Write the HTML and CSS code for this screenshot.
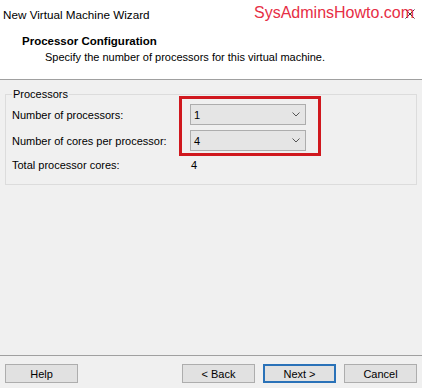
FILE: index.html
```html
<!doctype html>
<html>
<head>
<meta charset="utf-8">
<title>New Virtual Machine Wizard</title>
<link rel="stylesheet" href="styles.css">
</head>
<body>
<div class="wizard">
  <div class="titlebar">
    <span class="title">New Virtual Machine Wizard</span>
    <svg class="close" width="10" height="10" viewBox="0 0 10 10"><path d="M0.5 0.5L9.5 9.5M9.5 0.5L0.5 9.5" stroke="#333" stroke-width="1" fill="none"/></svg>
  </div>
  <div class="brand">SysAdminsHowto.com</div>

  <div class="header">
    <div class="header-title">Processor Configuration</div>
    <div class="header-sub">Specify the number of processors for this virtual machine.</div>
  </div>

  <div class="content">
    <fieldset class="group">
      <legend>Processors</legend>
      <div class="form">
        <span class="label">Number of processors:</span>
        <div class="combo"><span>1</span><svg width="8" height="5" viewBox="0 0 8 5"><polyline points="0.5,0.5 4,4 7.5,0.5" fill="none" stroke="#555" stroke-width="1"/></svg></div>
        <span class="label">Number of cores per processor:</span>
        <div class="combo"><span>4</span><svg width="8" height="5" viewBox="0 0 8 5"><polyline points="0.5,0.5 4,4 7.5,0.5" fill="none" stroke="#555" stroke-width="1"/></svg></div>
        <span class="label">Total processor cores:</span>
        <span class="value">4</span>
      </div>
    </fieldset>
  </div>
  <div class="highlight"></div>

  <div class="footer">
    <button class="btn">Help</button>
    <div class="nav">
      <button class="btn">&lt; Back</button>
      <button class="btn btn-default">Next &gt;</button>
      <button class="btn">Cancel</button>
    </div>
  </div>
</div>
</body>
</html>
```

FILE: styles.css
```css
* { margin: 0; padding: 0; box-sizing: border-box; }
body { background: #f0f0f0; font-family: "Liberation Sans", Arial, sans-serif; font-size: 11px; color: #000; }

.wizard { position: relative; width: 422px; height: 388px; display: flex; flex-direction: column; background: #f0f0f0; overflow: hidden; }

.titlebar { height: 28px; background: #fff; display: flex; align-items: center; padding: 0 7px 0 3px; }
.title { font-size: 11.7px; color: #000; }
.close { margin-left: auto; }

.brand { position: absolute; left: 254px; top: 4px; font-size: 16px; line-height: 18px; color: #e62e45; }

.header { height: 52px; background: #fff; border-bottom: 1px solid #a0a0a0; padding: 6px 0 0 22px; }
.header-title { font-weight: bold; font-size: 11.5px; line-height: 14px; }
.header-sub { line-height: 14px; margin-top: 2px; padding-left: 23px; }

.content { padding: 0 5px; }
.group { margin-top: 8px; border: 1px solid #dcdcdc; padding: 4px 6px 10px 6px; }
.group legend { padding: 0 1px; line-height: 12px; }

.form { display: grid; grid-template-columns: 178px 116px; grid-template-rows: 21px 21px 18px; row-gap: 5px; align-items: center; }
.combo { height: 21px; background: #e5e5e5; border: 1px solid #adadad; display: flex; align-items: center; justify-content: space-between; padding: 0 5px 0 3px; }
.value { padding-left: 1px; }

.highlight { position: absolute; left: 179px; top: 96px; width: 142px; height: 60px; border: 3px solid #d0181e; }

.footer { margin-top: auto; border-top: 1px solid #a0a0a0; padding: 8px 5px 5px 5px; display: flex; justify-content: space-between; }
.nav { display: flex; gap: 8px; }
.btn { width: 73px; height: 19px; background: #e1e1e1; border: 1px solid #adadad; font-family: "Liberation Sans", Arial, sans-serif; font-size: 11px; color: #000; }
.btn-default { border: 2px solid #2a72b8; }
```
